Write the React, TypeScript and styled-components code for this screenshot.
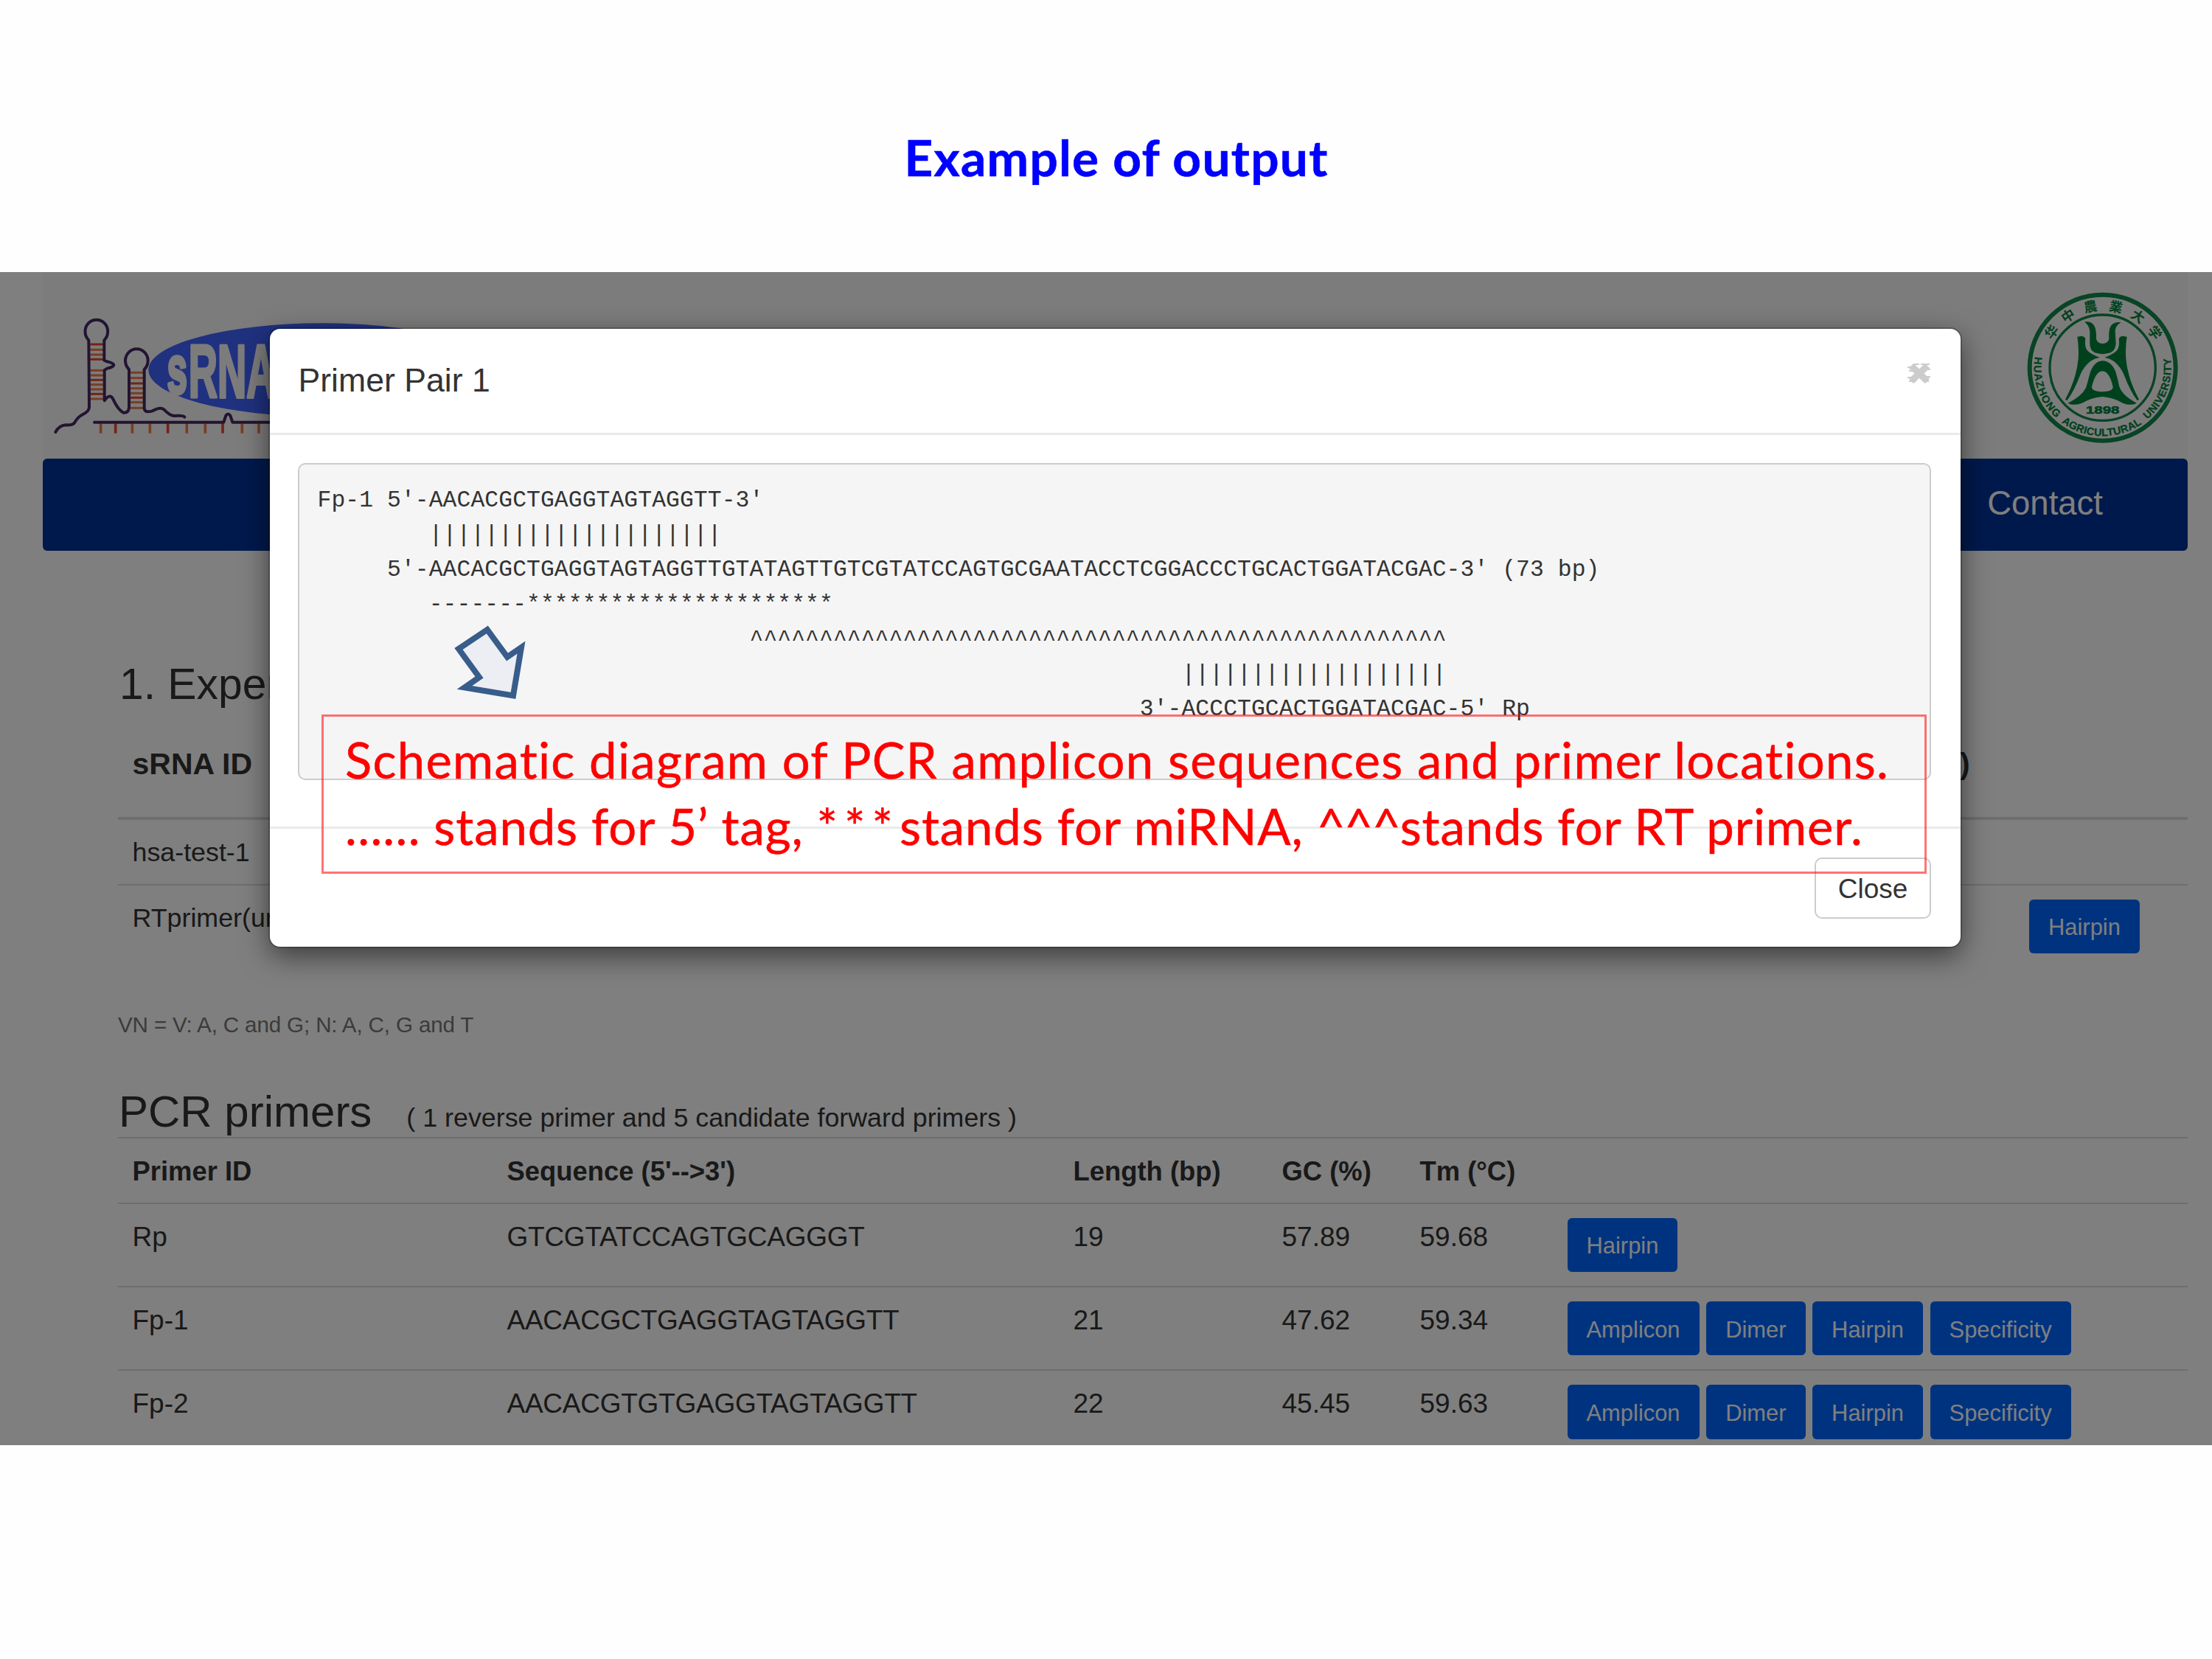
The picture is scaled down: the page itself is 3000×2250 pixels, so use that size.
import React from "react";
import styled, { createGlobalStyle } from "styled-components";

const SANS = '"Liberation Sans", Arial, sans-serif';
const SLIDE_FONT = 'Lato, "Open Sans", sans-serif';

const GlobalStyle = createGlobalStyle`
  * { box-sizing: border-box; }
  body { margin: 0; background: #fff; }
`;

const Slide = styled.main`
  display: flex;
  flex-direction: column;
  width: 3000px;
  height: 2250px;
  background: #fefefe;
  overflow: hidden;
`;

const SlideTitle = styled.h1`
  flex: none;
  height: 369px;
  margin: 0;
  padding: 168px 0 0 28px;
  font: 700 67.5px/90px ${SLIDE_FONT};
  letter-spacing: 1.3px;
  font-variant-ligatures: none;
  -webkit-text-stroke: 0.6px #0000ff;
  color: #0000ff;
  text-align: center;
`;

const Capture = styled.section`
  position: relative;
  flex: none;
  height: 1591px;
  overflow: hidden;
  background: #fff;
  font-family: ${SANS};
  color: #333;
`;

const Page = styled.div`
  display: flex;
  flex-direction: column;
  padding: 0 33px 0 58px;
`;

const Banner = styled.header`
  display: flex;
  justify-content: space-between;
  align-items: flex-start;
  height: 253px;
  padding: 25px 11px 0 2px;
  background: #faf9f9;
`;

const LogoSvg = styled.svg`
  display: block;
  width: 480px;
  height: 200px;
  margin-top: 26px;
  overflow: visible;
`;

const SealSvg = styled.svg`
  display: block;
  width: 209.3px;
  height: 209.3px;
`;

const Nav = styled.nav`
  display: flex;
  justify-content: flex-end;
  height: 125px;
  padding: 34px 115px 0 0;
  border-radius: 6px;
  background: #003399;
`;

const NavLink = styled.span`
  font-size: 45.5px;
  line-height: 54px;
  color: #fff;
`;

const Content = styled.div`
  display: flex;
  flex-direction: column;
  padding: 148px 0 0 102px;
`;

const Heading = styled.h2`
  display: flex;
  align-items: baseline;
  gap: 47px;
  height: 66px;
  margin: 0;
  padding-left: 1px;
  font-size: 60px;
  font-weight: 400;
  line-height: 66px;
  white-space: nowrap;
`;

const TopHeading = styled(Heading)`
  padding-left: 2px;
  font-size: 58.8px;
`;

const HeadingNote = styled.small`
  font-size: 35.8px;
`;

const TemplateRow = styled.div<{ $height: number; $line?: boolean }>`
  display: grid;
  grid-template-columns: 2498px 74px 1fr;
  align-items: start;
  height: ${(p) => p.$height}px;
  border-top: ${(p) => (p.$line ? "2px solid #ddd" : "none")};
`;

const TemplateHead = styled(TemplateRow)`
  border-bottom: 4px solid #ddd;
`;

const PrimerTable = styled.div`
  display: flex;
  flex-direction: column;
  margin-top: 1px;
`;

const PrimerRow = styled.div<{ $height: number }>`
  display: grid;
  grid-template-columns: 508px 768px 283px 187px 199.5px 1fr;
  align-items: start;
  height: ${(p) => p.$height}px;
  border-top: 2px solid #ddd;
`;

const Cell = styled.div<{ $bold?: boolean; $size?: number; $top?: number; $left?: number }>`
  padding: ${(p) => p.$top ?? 23}px 0 0 ${(p) => p.$left ?? 19.5}px;
  font-size: ${(p) => p.$size ?? 37}px;
  font-weight: ${(p) => (p.$bold ? 700 : 400)};
  line-height: 44px;
  white-space: nowrap;
`;

const SequenceCell = styled(Cell)`
  letter-spacing: -0.25px;
`;

const Actions = styled.div`
  display: flex;
  gap: 9.6px;
  padding: 19px 0 0 20px;
`;

const ActionButton = styled.button`
  height: 73.6px;
  margin: 0;
  padding: 4px 26px 0;
  border: 0;
  border-radius: 6px;
  background: #0066ff;
  color: #fff;
  font: 400 30.9px/36px ${SANS};
`;

const Footnote = styled.p`
  height: 40px;
  margin: 46px 0 65px;
  font-size: 29.6px;
  line-height: 40px;
  letter-spacing: -0.15px;
  color: #777;
`;

const Backdrop = styled.div`
  position: absolute;
  inset: 0;
  background: rgba(0, 0, 0, 0.5);
`;

const Modal = styled.div`
  position: absolute;
  left: 366px;
  top: 77px;
  display: flex;
  flex-direction: column;
  width: 2293px;
  height: 838px;
  border-radius: 14px;
  background: #fff;
  box-shadow: 0 0 0 2px rgba(0, 0, 0, 0.2), 0 12px 38px rgba(0, 0, 0, 0.55);
`;

const ModalHeader = styled.div`
  display: flex;
  justify-content: space-between;
  height: 144px;
  padding: 43px 40px 0 38.5px;
  border-bottom: 3px solid #eaeaea;
`;

const ModalTitle = styled.h3`
  margin: 0;
  font-size: 44.6px;
  font-weight: 400;
  line-height: 54px;
`;

const DismissSvg = styled.svg`
  width: 32px;
  height: 27px;
  margin-top: 4px;
`;

const Alignment = styled.div`
  display: flex;
  flex-direction: column;
  height: 430px;
  margin: 38px 40px 63px 38px;
  padding: 25px 0 0 24.5px;
  border: 2px solid #ccc;
  border-radius: 10px;
  background: #f5f5f5;
`;

const AlignmentLine = styled.code`
  height: 47.15px;
  font-family: "Liberation Mono", monospace;
  font-size: 31.4px;
  line-height: 47.15px;
  letter-spacing: 0.065px;
  white-space: pre;
  font-variant-ligatures: none;
`;

const ModalFooter = styled.div`
  display: flex;
  flex: 1;
  justify-content: flex-end;
  align-items: flex-start;
  padding: 39px 40px 0 0;
  border-top: 3px solid #eaeaea;
`;

const CloseButton = styled.button`
  width: 158px;
  height: 83px;
  padding: 2px 0 0;
  border: 2px solid #ccc;
  border-radius: 10px;
  background: #fff;
  color: #333;
  font: 400 37px/44px ${SANS};
`;

const Callout = styled.div`
  position: absolute;
  left: 436px;
  top: 600px;
  width: 2177px;
  height: 216px;
  padding: 13px 0 0 29px;
  border: 3px solid rgba(255, 0, 0, 0.55);
  color: #ff0000;
`;

const CalloutLine = styled.div<{ $spacing: number }>`
  height: 90px;
  font: 400 67px/90px ${SLIDE_FONT};
  font-variant-ligatures: none;
  -webkit-text-stroke: 0.5px #ff0000;
  letter-spacing: ${(p) => p.$spacing}px;
  white-space: nowrap;
`;

const Marks = styled.span<{ $spacing: number }>`
  letter-spacing: ${(p) => p.$spacing}px;
`;

const PointerSvg = styled.svg`
  position: absolute;
  left: 600px;
  top: 461px;
  width: 130px;
  height: 130px;
`;

const alignment = [
  "Fp-1 5'-AACACGCTGAGGTAGTAGGTT-3'",
  " ".repeat(8) + "|".repeat(21),
  "     5'-AACACGCTGAGGTAGTAGGTTGTATAGTTGTCGTATCCAGTGCGAATACCTCGGACCCTGCACTGGATACGAC-3' (73 bp)",
  " ".repeat(8) + "-".repeat(7) + "*".repeat(22),
  " ".repeat(31) + "^".repeat(50),
  " ".repeat(62) + "|".repeat(19),
  " ".repeat(59) + "3'-ACCCTGCACTGGATACGAC-5' Rp",
];

const primers = [
  { id: "Rp", seq: "GTCGTATCCAGTGCAGGGT", len: "19", gc: "57.89", tm: "59.68", actions: ["Hairpin"] },
  { id: "Fp-1", seq: "AACACGCTGAGGTAGTAGGTT", len: "21", gc: "47.62", tm: "59.34", actions: ["Amplicon", "Dimer", "Hairpin", "Specificity"] },
  { id: "Fp-2", seq: "AACACGTGTGAGGTAGTAGGTT", len: "22", gc: "45.45", tm: "59.63", actions: ["Amplicon", "Dimer", "Hairpin", "Specificity"] },
];

const leftRungs = [141, 163, 183, 202, 247, 267, 286, 305, 324, 343, 363];
const rightRungs = [256, 278, 300, 320, 340, 358, 377, 400];
const ticks = [230, 290, 358, 430, 503, 580, 655, 726, 805, 873];
const rungColor = (i: number) => (i % 3 === 0 ? "#e8482f" : "#f07a48");

function Logo() {
  return (
    <LogoSvg viewBox="0 0 1440 600">
      <ellipse cx="1130" cy="245" rx="706" ry="190" fill="#4062ff" />
      <g fill="#faf8f8" stroke="#faf8f8" strokeLinejoin="round" fontFamily={SANS} fontWeight="700">
        <text transform="translate(500 338) scale(.53 1)" fontSize="275" strokeWidth="16">s</text>
        <text transform="translate(587 358) scale(.53 1)" fontSize="308" strokeWidth="12">RNA</text>
      </g>
      {leftRungs.map((y, i) => (
        <path key={y} d={`M187 ${y}H240`} stroke={rungColor(i)} strokeWidth="9" />
      ))}
      {rightRungs.map((y, i) => (
        <path key={y} d={`M351 ${y}H403`} stroke={rungColor(i + 1)} strokeWidth="9" />
      ))}
      {ticks.map((x, i) => (
        <path key={x} d={`M${x} 463V503`} stroke={rungColor(i + 2)} strokeWidth="11" />
      ))}
      <g fill="none" stroke="#442864" strokeWidth="12" strokeLinecap="round" strokeLinejoin="round">
        <path d="M46 498Q60 471 88 469Q112 471 122 462Q134 440 150 430Q184 415 183 395L181 124A46 48 0 1 1 244 124V206L256 211Q283 217 283 225Q280 234 256 239L245 246V370Q266 340 279 362Q300 408 322 419Q345 421 345 395V243A46 48 0 1 1 407 243V402Q409 421 440 412Q472 394 487 406Q512 432 530 432Q566 429 571 437" />
        <path d="M204 458H730L739 431Q748 418 757 431L766 458H960" />
      </g>
    </LogoSvg>
  );
}

const sealGlyphs: [string, number, number, number][] = [
  ["华", 428, 270, -52],
  ["中", 495, 205, -33],
  ["農", 586, 167, -11],
  ["業", 690, 168, 12],
  ["大", 780, 207, 34],
  ["学", 848, 273, 55],
];

function Seal() {
  const leg =
    "M533 290L551 287Q561 288 566 297Q562 330 573 345Q588 362 624 374Q602 378 586 390Q560 412 547 440Q520 512 491 550L484 545Q530 460 537 380Q540 330 533 290Z";
  return (
    <SealSvg viewBox="322 102 628 628" fill="#00823a">
      <g fill="none" stroke="#10884a">
        <circle cx="636" cy="416" r="297" strokeWidth="18" />
        <circle cx="636" cy="416" r="215" strokeWidth="10" />
      </g>
      <path d="M562 230Q588 225 602 245Q611 260 610 298Q613 318 636 318Q659 318 662 298Q660 260 670 245Q685 228 711 232Q688 245 687 266L690 318Q688 345 668 355Q636 366 604 355Q584 345 584 318V268Q582 243 562 230Z" />
      <path d={leg} />
      <path d={leg} transform="matrix(-1 0 0 1 1268 0)" />
      <path
        fillRule="evenodd"
        d="M635 388Q671 390 688 430Q699 465 703 490Q715 530 775 560Q752 573 718 560Q680 537 635 534Q590 538 552 560Q515 573 495 560Q551 532 568 498Q577 470 584 440Q600 390 635 388ZM635 430Q606 432 592 495Q593 513 635 514Q678 512 678 495Q665 432 635 430Z"
      />
      <text x="568" y="604" fontFamily={SANS} fontWeight="700" fontSize="45" textLength="136" lengthAdjust="spacingAndGlyphs" stroke="#00823a" strokeWidth="2">1898</text>
      <path id="sealArc" fill="none" d="M363 358A279 279 0 1 0 909 358" />
      <g fontFamily={SANS} fontWeight="700" fontSize="43" stroke="#00823a" strokeWidth="1">
        <text textLength="275"><textPath href="#sealArc" startOffset="14" textLength="275">HUAZHONG</textPath></text>
        <text textLength="350"><textPath href="#sealArc" startOffset="316" textLength="350">AGRICULTURAL</textPath></text>
        <text textLength="278"><textPath href="#sealArc" startOffset="694" textLength="278">UNIVERSITY</textPath></text>
      </g>
      <g fontFamily='"Noto Sans CJK SC", sans-serif' fontWeight="700" fontSize="54" textAnchor="middle">
        {sealGlyphs.map(([ch, x, y, r]) => (
          <text key={ch} transform={`translate(${x} ${y}) rotate(${r})`} y="20">{ch}</text>
        ))}
      </g>
    </SealSvg>
  );
}

export default function App() {
  return (
    <>
      <GlobalStyle />
      <Slide>
        <SlideTitle>Example of output</SlideTitle>
        <Capture>
          <Page>
            <Banner>
              <Logo />
              <Seal />
            </Banner>
            <Nav>
              <NavLink>Contact</NavLink>
            </Nav>
            <Content>
              <TopHeading>1. Exper</TopHeading>
              <TemplateHead $height={150.5}>
                <Cell $bold $size={41} $top={53}>sRNA ID</Cell>
                <Cell $bold $size={41} $top={53} $left={0}>)</Cell>
              </TemplateHead>
              <TemplateRow $height={87}>
                <Cell $size={35.8} $top={22}>hsa-test-1</Cell>
              </TemplateRow>
              <TemplateRow $height={125} $line>
                <Cell $size={35.8} $top={22}>RTprimer(un</Cell>
                <span />
                <Actions>
                  <ActionButton>Hairpin</ActionButton>
                </Actions>
              </TemplateRow>
              <Footnote>VN = V: A, C and G; N: A, C, G and T</Footnote>
              <Heading>
                PCR primers
                <HeadingNote>( 1 reverse primer and 5 candidate forward primers )</HeadingNote>
              </Heading>
              <PrimerTable>
                <PrimerRow $height={89}>
                  {["Primer ID", "Sequence (5'-->3')", "Length (bp)", "GC (%)", "Tm (°C)"].map((h) => (
                    <Cell key={h} $bold $size={36.4}>{h}</Cell>
                  ))}
                </PrimerRow>
                {primers.map((p) => (
                  <PrimerRow key={p.id} $height={113.4}>
                    <Cell>{p.id}</Cell>
                    <SequenceCell>{p.seq}</SequenceCell>
                    <Cell>{p.len}</Cell>
                    <Cell>{p.gc}</Cell>
                    <Cell>{p.tm}</Cell>
                    <Actions>
                      {p.actions.map((a) => (
                        <ActionButton key={a}>{a}</ActionButton>
                      ))}
                    </Actions>
                  </PrimerRow>
                ))}
              </PrimerTable>
            </Content>
          </Page>
          <Backdrop />
          <Modal>
            <ModalHeader>
              <ModalTitle>Primer Pair 1</ModalTitle>
              <DismissSvg viewBox="0 0 32 27">
                <path d="M5 3L27 24M27 3L5 24" stroke="#ccc" strokeWidth="9" />
                <path d="M0 5H9M2 10H12M20 8H31M0 19H10M2 24H12M21 18H31M22 24H29M9 1H16M18 1H30" stroke="#ccc" strokeWidth="2" />
              </DismissSvg>
            </ModalHeader>
            <Alignment>
              {alignment.map((line, i) => (
                <AlignmentLine key={i}>{line}</AlignmentLine>
              ))}
            </Alignment>
            <ModalFooter>
              <CloseButton>Close</CloseButton>
            </ModalFooter>
          </Modal>
          <PointerSvg viewBox="600 830 130 130">
            <path d="M660.8 854L622 880L650 918.5L630 932.5L696 943.5L707 878L688 891Z" fill="#eceef3" stroke="#385d8a" strokeWidth="8" strokeMiterlimit="10" />
          </PointerSvg>
          <Callout>
            <CalloutLine $spacing={1.3}>Schematic diagram of PCR amplicon sequences and primer locations.</CalloutLine>
            <CalloutLine $spacing={0.9}>
              …… stands for 5’ tag, <Marks $spacing={9}>***</Marks>stands for miRNA, <Marks $spacing={-1.2}>^^^</Marks>stands for RT primer.
            </CalloutLine>
          </Callout>
        </Capture>
      </Slide>
    </>
  );
}
